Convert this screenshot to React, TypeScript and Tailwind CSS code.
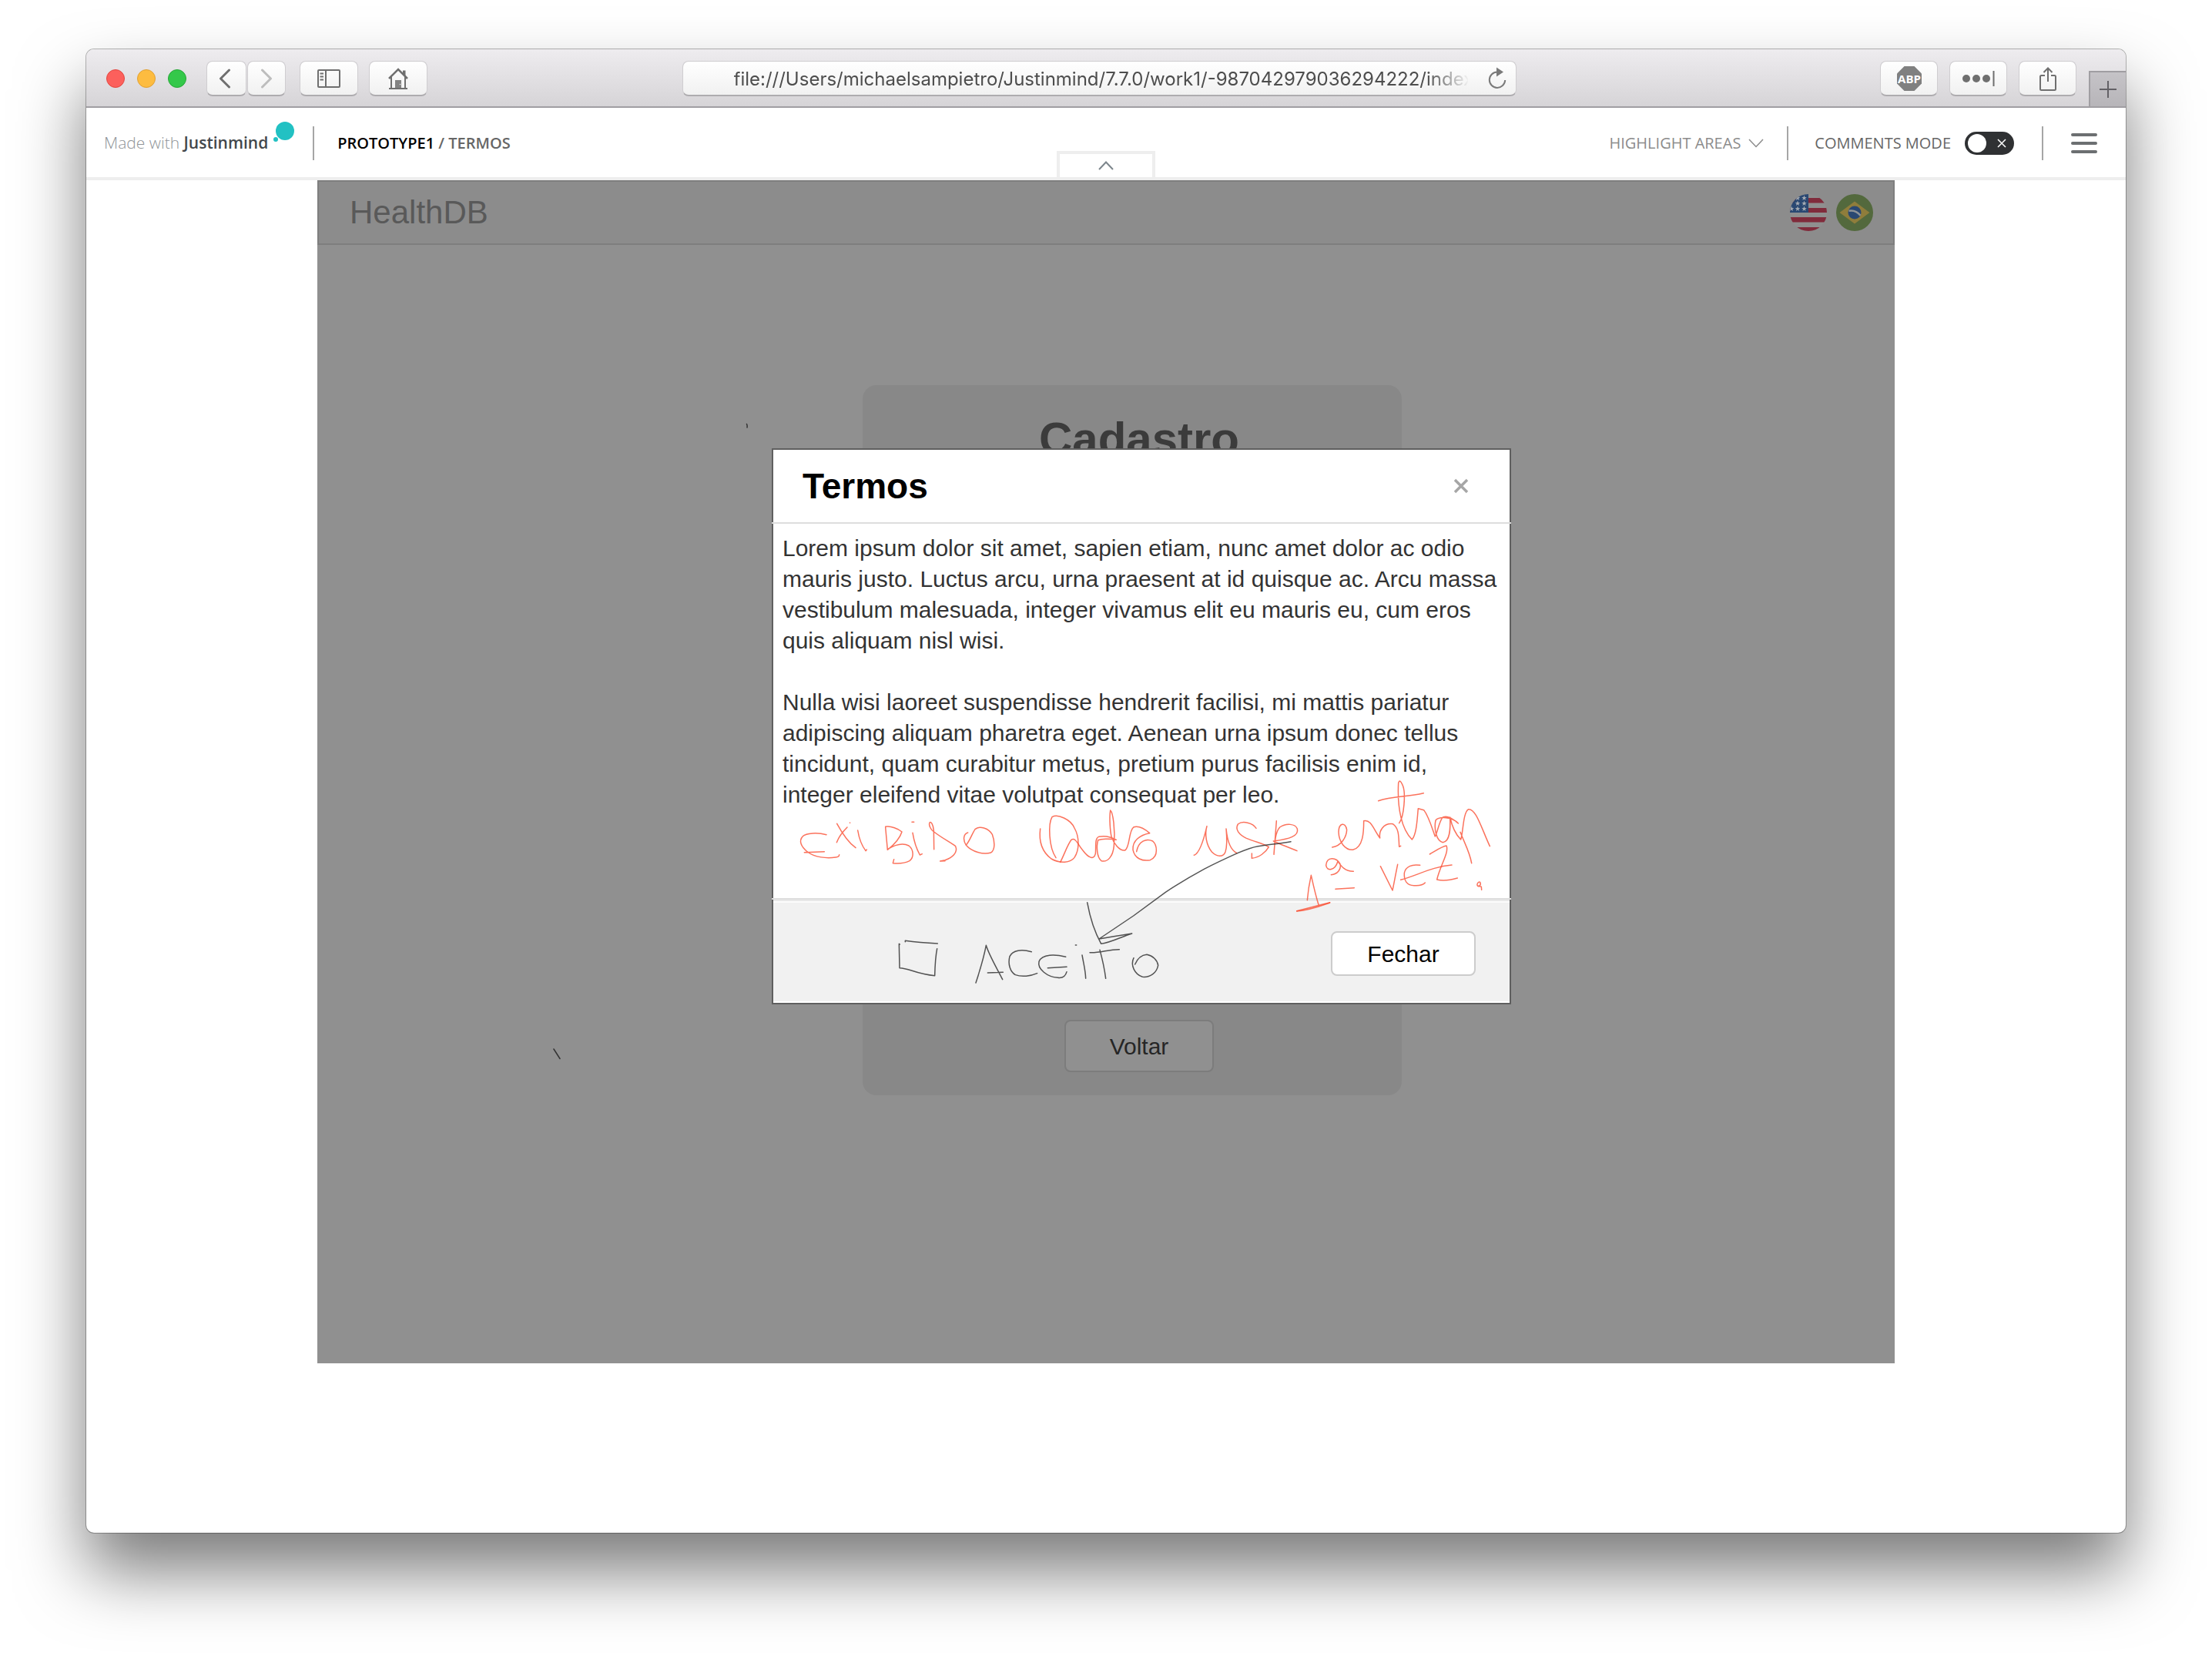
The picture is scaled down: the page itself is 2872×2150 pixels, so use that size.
import type { ReactNode } from "react";

const toolButton =
  "flex h-[46px] items-center justify-center rounded-[8px] border border-[#cfcdd0] border-b-2 border-b-[#aeacaf] bg-linear-to-b from-white to-[#f1f1f1] text-[#6f6f6f]";

function ToolButton({ label, size, children }: { label: string; size: string; children: ReactNode }) {
  return (
    <button type="button" aria-label={label} className={`${toolButton} ${size}`}>
      {children}
    </button>
  );
}

function BrowserToolbar() {
  return (
    <header className="flex h-[76px] items-center rounded-t-[10px] border-b-2 border-[#a09ea2] bg-linear-to-b from-[#eeecef] to-[#d6d4d7]">
      <div className="flex flex-1 items-center pt-[2px]">
        <div className="ml-[26px] flex gap-4">
          <button type="button" aria-label="Close window" className="size-6 rounded-full border border-[#e2463f] bg-[#fc605c]" />
          <button type="button" aria-label="Minimize window" className="size-6 rounded-full border border-[#e0a033] bg-[#fdbc40]" />
          <button type="button" aria-label="Zoom window" className="size-6 rounded-full border border-[#27a737] bg-[#34c84a]" />
        </div>
        <div className="ml-[26px] flex">
          <ToolButton label="Back" size="w-[52px] pr-1">
            <svg width="16" height="26" viewBox="0 0 16 26" fill="none" stroke="currentColor" strokeWidth="3" strokeLinecap="round" strokeLinejoin="round">
              <path d="M13.500 2L2.500 13l11 11" />
            </svg>
          </ToolButton>
          <ToolButton label="Forward" size="ml-px w-[50px]">
            <svg width="16" height="26" viewBox="0 0 16 26" fill="none" stroke="#bdbdbd" strokeWidth="3" strokeLinecap="round" strokeLinejoin="round">
              <path d="M2.500 2l11 11-11 11" />
            </svg>
          </ToolButton>
          <ToolButton label="Show sidebar" size="ml-[18px] w-[76px]">
            <svg width="32" height="26" viewBox="0 0 32 26" fill="none" stroke="currentColor" strokeWidth="2">
              <rect x="2" y="2" width="28" height="22" rx="1" />
              <path d="M12 2v22M4.500 6.500h4.500M4.500 10.500h4.500M4.500 14.500h4.500" />
            </svg>
          </ToolButton>
          <ToolButton label="Home" size="ml-[14px] w-[76px]">
            <svg width="28" height="30" viewBox="0 0 28 30" fill="none" stroke="currentColor" strokeWidth="2">
              <path d="M2 15L14 3l12 12" strokeWidth="2.500" />
              <path d="M5 13v14M23 13v14M2 28h24" />
              <path d="M20 4.500h3.500v8L20 9z" fill="currentColor" stroke="none" />
              <path d="M10 17h8v11h-8z" fill="currentColor" fillOpacity=".85" stroke="none" />
              <circle cx="16.500" cy="22.500" r=".7" fill="white" stroke="none" />
            </svg>
          </ToolButton>
        </div>
      </div>

      <div className="mt-[2px] mr-[18px] flex h-[46px] w-[1083px] items-center rounded-[8px] border border-[#cfcdd0] border-b-2 border-b-[#aeacaf] bg-linear-to-b from-white to-[#f1f1f1] pr-3 pl-[66px]">
        <input
          aria-label="Address"
          readOnly
          defaultValue="file:///Users/michaelsampietro/Justinmind/7.7.0/work1/-987042979036294222/index.html"
          className="min-w-0 flex-1 bg-transparent pt-[2px] font-[Inter,sans-serif] text-[24px] text-[#4d4d4d] outline-none mask-r-from-[900px] mask-r-to-[955px]"
        />
        <button type="button" aria-label="Reload" className="ml-[26px] text-[#7a7a7a]">
          <svg width="24" height="32" viewBox="0 0 24 32" fill="none" stroke="currentColor" strokeWidth="2">
            <path d="M12 7.500a10.200 10.200 0 1 0 10.200 10.500" />
            <path d="M11 1.500l9 6-9 6z" fill="currentColor" stroke="none" />
          </svg>
        </button>
      </div>

      <div className="flex h-full flex-1 items-center justify-end">
        <div className="flex gap-[15px] pt-[2px]">
          <ToolButton label="Adblock Plus" size="w-[75px]">
            <svg width="32" height="32" viewBox="0 0 32 32">
              <path d="M9.500 0h13L32 9.500v13L22.500 32h-13L0 22.500v-13z" fill="#808080" />
              <text x="16" y="22" textAnchor="middle" fill="white" className="font-['Open_Sans',sans-serif] text-[15px] font-bold">
                ABP
              </text>
            </svg>
          </ToolButton>
          <ToolButton label="Passwords" size="w-[75px]">
            <svg width="44" height="22" viewBox="0 0 44 22" fill="currentColor">
              <circle cx="6" cy="11" r="5" />
              <circle cx="19" cy="11" r="5" />
              <circle cx="32" cy="11" r="5" />
              <path d="M40.500 1h2v20h-2z" />
            </svg>
          </ToolButton>
          <ToolButton label="Share" size="w-[75px]">
            <svg width="24" height="32" viewBox="0 0 24 32" fill="none" stroke="currentColor" strokeWidth="2">
              <path d="M8 12H3.500q-1.500 0-1.500 1.500v16q0 1.500 1.500 1.500h17q1.500 0 1.500-1.500v-16q0-1.500-1.500-1.500H16" />
              <path d="M12 20V2.500M6.500 8L12 2.500 17.500 8" />
            </svg>
          </ToolButton>
        </div>
        <button type="button" aria-label="New tab" className="ml-4 flex h-[46px] w-12 items-center justify-center self-end border-t-2 border-l-2 border-[#a09ea2] bg-linear-to-b from-[#c5c3c7] to-[#b7b5b9] text-[#636166]">
          <svg width="24" height="24" viewBox="0 0 24 24" stroke="currentColor" strokeWidth="2">
            <path d="M12 1v22M1 12h22" />
          </svg>
        </button>
      </div>
    </header>
  );
}

function Divider() {
  return <span className="h-11 w-[2px] bg-[#a6a6a6]" />;
}

function PrototypeBar() {
  return (
    <nav className="relative flex h-[94px] items-center justify-between border-b-4 border-[#eee] pt-[2px] pr-[37px] pl-[23px] font-['Open_Sans',sans-serif] text-[20px]">
      <div className="flex items-center">
        <a href="#justinmind" className="flex text-[21px] font-light text-[#8f9498]">
          <span>
            Made with <span className="font-semibold text-[#43484c]">Justinmind</span>
          </span>
          <svg className="-mt-3 ml-[6px]" width="28" height="28" viewBox="0 0 28 28" fill="#22c1c3">
            <circle cx="16" cy="12" r="12" />
            <circle cx="4" cy="23" r="3" />
          </svg>
        </a>
        <div className="ml-6 flex items-center gap-[30px]">
          <Divider />
          <p className="font-semibold text-[#666]">
            <span className="text-black">PROTOTYPE1</span> / TERMOS
          </p>
        </div>
      </div>

      <button
        type="button"
        aria-label="Collapse bar"
        className="absolute bottom-0 left-1/2 flex h-[34px] w-32 -translate-x-1/2 items-center justify-center border-4 border-b-0 border-[#eee]"
      >
        <svg width="20" height="12" viewBox="0 0 20 12" fill="none" stroke="#7d868c" strokeWidth="2">
          <path d="M1 11l9-9.500 9 9.500" />
        </svg>
      </button>

      <div className="flex items-center">
        <button type="button" className="flex items-center gap-[10px] text-[#8c8c8c]">
          HIGHLIGHT AREAS
          <svg width="20" height="12" viewBox="0 0 20 12" fill="none" stroke="currentColor" strokeWidth="1.500">
            <path d="M1 1l9 9.500L19 1" />
          </svg>
        </button>
        <div className="ml-[30px] flex items-center gap-9">
          <div className="flex items-center gap-[34px]">
            <Divider />
            <label className="flex items-center gap-[18px] text-[#666]">
              COMMENTS MODE
              <input type="checkbox" role="switch" className="peer sr-only" />
              <span className="flex h-[30px] w-16 items-center justify-between rounded-full bg-[#2f3133] pr-[10px] pl-1">
                <span className="size-6 rounded-full bg-white" />
                <svg width="12" height="12" viewBox="0 0 12 12" stroke="white" strokeWidth="1.500">
                  <path d="M1 1l10 10M11 1L1 11" />
                </svg>
              </span>
            </label>
          </div>
          <Divider />
          <button type="button" aria-label="Menu" className="flex w-[34px] flex-col gap-[7px]">
            <span className="h-1 rounded-full bg-[#6c6f71]" />
            <span className="h-1 rounded-full bg-[#6c6f71]" />
            <span className="h-1 rounded-full bg-[#6c6f71]" />
          </button>
        </div>
      </div>
    </nav>
  );
}

const star = "M0-3.500L.9-1.100H3.300L1.400.5 2.100 2.900 0 1.500-2.100 2.900-1.400.5-3.300-1.100H-.9z";

function FlagUS() {
  return (
    <svg width="48" height="48" viewBox="0 0 48 48">
      <clipPath id="us">
        <circle cx="24" cy="24" r="24" />
      </clipPath>
      <g clipPath="url(#us)">
        <path d="M0 0h48v48H0z" fill="#8f8f8f" />
        <path d="M0 5h48v6.500H0zM0 18h48v6H0zM0 30h48v6.500H0zM0 43h48v6H0z" fill="#802b3b" />
        <path d="M0 0h24v24H0z" fill="#2a4872" />
        <g fill="#a3a9b1">
          {[[18.500, 5], [10, 12], [18.500, 12], [2, 19], [10, 19], [18.500, 19], [10, 5]].map(([x, y]) => (
            <path key={`${x}-${y}`} d={star} transform={`translate(${x} ${y})`} />
          ))}
        </g>
      </g>
    </svg>
  );
}

function FlagBR() {
  return (
    <svg width="48" height="48" viewBox="0 0 48 48">
      <circle cx="24" cy="24" r="24" fill="#53693d" />
      <path d="M24 9.500L43.500 24 24 38.500 4.500 24z" fill="#8f7d3b" />
      <circle cx="24" cy="24" r="8.500" fill="#2a4872" />
      <path d="M16.500 21.800c5.500-1 11 1 15 6" fill="none" stroke="#8f9499" strokeWidth="2.600" />
    </svg>
  );
}

function Annotations() {
  return (
    <svg
      aria-hidden="true"
      className="pointer-events-none absolute inset-x-0 bottom-0 h-[284px] w-full overflow-visible"
      viewBox="36 0 2880 852"
      fill="none"
      strokeLinecap="round"
      strokeLinejoin="round"
    >
      <g stroke="#fa4a2e" strokeOpacity=".78" strokeWidth="4.500">
        <path d="M249 191C215 182 170 184 157 197C140 215 150 238 175 258C205 280 250 284 285 279Q299 277 299 269M163 260L241 257" />
        <path d="M290 148C310 185 335 222 363 242M330 162C310 182 297 200 289 221M340 145h1M371 174C376 205 388 235 402 254L406 249" />
        <path d="M479 162L487 250C510 232 535 205 543 180C530 168 500 156 479 160M487 248C520 228 550 224 570 234C590 250 590 280 573 293C555 302 530 304 508 302L512 287" />
        <path d="M582 142h8M585 184C590 215 602 250 613 270L622 266" />
        <path d="M668 248L667 175C665 150 656 138 651 144C646 155 658 175 668 180C700 205 735 222 752 236C762 260 740 280 711 290L692 294L711 293" />
        <path d="M800 183C782 188 780 212 793 232C815 258 860 270 890 261C908 248 904 215 895 190C880 165 845 155 828 170C815 190 806 218 794 230" />
        <path d="M1082 168C1076 215 1085 255 1125 285C1160 305 1200 300 1215 280C1235 250 1235 200 1215 165C1200 130 1150 110 1128 122C1112 150 1115 240 1143 281" />
        <path d="M1160 298C1175 270 1188 230 1203 211C1220 200 1228 230 1250 255C1265 275 1290 295 1297 265C1300 240 1293 205 1310 199C1330 195 1355 198 1378 211C1350 205 1320 208 1307 212C1300 235 1302 280 1320 293C1345 300 1365 275 1369 235C1375 170 1365 105 1355 96C1350 130 1355 180 1359 198C1368 225 1390 255 1412 252C1432 240 1425 180 1445 162C1465 155 1490 170 1508 185C1470 192 1440 215 1443 250C1450 285 1480 295 1510 290C1545 275 1536 230 1520 216C1495 205 1465 215 1457 257" />
      </g>
      <g transform="translate(1470 -60)" stroke="#fa4a2e" strokeOpacity=".78" strokeWidth="4.500">
        <path d="M211 331C232 325 250 265 261 218C252 250 258 290 280 318C300 338 325 340 333 318C342 290 338 250 336 228C340 270 350 310 378 323" />
        <path d="M453 226C440 205 400 195 382 210C370 230 385 250 415 265C450 280 480 285 502 299C490 320 465 340 436 343L436 324" />
        <path d="M532 197L522 328C525 280 528 240 545 222C570 205 605 208 613 228C620 255 585 268 520 276C550 290 580 300 612 314" />
        <path d="M749 300C785 295 805 260 806 232C800 200 775 205 774 240C775 280 800 312 830 310C870 300 872 240 872 197C900 190 910 230 935 264C930 235 950 205 985 209C1010 225 1008 260 1010 298L1016 295" />
        <path d="M1010 206C1030 180 1035 90 1025 62Q1012 30 1007 50C1002 150 1020 230 1060 270C1078 250 1080 190 1084 149L1106 155C1125 180 1138 225 1150 258C1160 240 1165 200 1180 183C1200 175 1220 190 1240 207C1215 180 1165 180 1152 195C1145 230 1155 275 1180 281C1208 278 1210 230 1208 183C1215 215 1230 250 1250 270C1260 240 1258 165 1280 152C1310 150 1330 225 1363 296M929 119C985 100 1040 105 1105 89M1248 241C1265 285 1285 320 1292 362" />
        <path d="M652 506C655 470 660 440 667 409C675 445 685 490 697 527M611 548L740 515" />
        <path d="M611 549C660 545 700 530 740 516" />
        <path d="M745 407C770 405 785 385 780 365C765 338 728 335 725 370C728 395 760 392 771 355C785 375 800 395 832 394M762 463L835 458" />
        <path d="M937 374L984 468C990 440 997 400 1004 367" />
        <path d="M1091 370C1060 365 1035 375 1030 400C1028 430 1040 450 1070 449C1090 450 1105 445 1111 438M1016 427C1080 410 1140 375 1215 369" />
        <path d="M1129 327C1150 315 1175 297 1194 294C1205 320 1170 370 1157 426C1180 432 1210 428 1237 420" />
        <path d="M1318 452C1308 448 1318 432 1325 436C1332 450 1315 455 1316 450L1330 454L1331 466" />
      </g>
      <g stroke="#2b2b2b" strokeOpacity=".8" strokeWidth="4.500">
        <path d="M535 618L532 616L534 710C570 710 600 735 671 740C672 700 674 665 680 635M556 608L556 604C600 610 640 613 682 615" />
        <path d="M831 768C845 725 862 670 871 622C882 660 915 715 935 755M877 729L937 727" />
        <path d="M1048 647C1010 637 975 640 963 665C955 695 965 725 985 737C1010 746 1045 742 1070 731" />
        <path d="M1181 667C1140 657 1090 655 1077 685C1070 715 1110 745 1150 748Q1178 752 1185 725M1111 710L1185 706" />
        <path d="M1219 621h4M1245 660C1252 700 1258 720 1259 751M1275 650C1315 652 1350 637 1390 638M1314 640C1325 680 1333 720 1337 751" />
        <path d="M1451 696C1460 675 1475 660 1497 658C1520 662 1538 680 1541 700C1535 730 1510 748 1480 745C1450 735 1432 700 1446 671" />
        <path d="M1265 455C1275 510 1288 560 1319 616C1355 612 1395 590 1439 576C1400 582 1350 590 1311 597L1445 507L1570 415C1620 382 1670 352 1720 325C1765 302 1810 281 1850 263C1880 250 1905 240 1930 236C1970 229 2015 226 2058 218" />
      </g>
    </svg>
  );
}

function TermsDialog() {
  return (
    <section role="dialog" aria-labelledby="terms-title" className="relative w-[960px] bg-white text-[30px]">
      <div className="border-2 border-b-0 border-[#5f5f5f] pr-[53px] pl-[38px]">
        <div className="flex h-[94px] items-center justify-between">
          <h2 id="terms-title" className="text-[46px] font-bold text-black">
            Termos
          </h2>
          <button type="button" aria-label="Close" className="text-[#a6a6a6]">
            <svg width="20" height="20" viewBox="0 0 20 20" stroke="currentColor" strokeWidth="3.500">
              <path d="M2 2l16 16M18 2L2 18" />
            </svg>
          </button>
        </div>
      </div>
      <div className="h-[2px] bg-[#ddd]" />
      <div className="min-h-[486px] border-x-2 border-[#5f5f5f] px-3 pt-3 leading-10 text-[#333]">
        <p>
          Lorem ipsum dolor sit amet, sapien etiam, nunc amet dolor ac odio mauris justo. Luctus arcu, urna praesent at
          id quisque ac. Arcu massa vestibulum malesuada, integer vivamus elit eu mauris eu, cum eros quis aliquam nisl
          wisi.
        </p>
        <p className="mt-10">
          Nulla wisi laoreet suspendisse hendrerit facilisi, mi mattis pariatur adipiscing aliquam pharetra eget. Aenean
          urna ipsum donec tellus tincidunt, quam curabitur metus, pretium purus facilisis enim id, integer eleifend
          vitae volutpat consequat per leo.
        </p>
      </div>
      <div className="h-[2px] bg-[#ddd]" />
      <div className="border-2 border-t-0 border-[#5f5f5f] pb-[2px]">
        <div className="h-[2px] bg-[#e8e8e8]" />
        <div className="flex h-[130px] items-center justify-end border-t-2 border-[#fcfcfc] bg-[#f1f1f1] pt-1 pr-11">
          <button type="button" className="h-[58px] w-[188px] rounded-[8px] border-2 border-[#ccc] bg-white text-black">
            Fechar
          </button>
        </div>
      </div>
      <Annotations />
    </section>
  );
}

function Prototype() {
  return (
    <main className="relative mx-auto flex min-h-[1536px] w-full max-w-[2048px] flex-col bg-[#909090] font-['Liberation_Sans',Arial,sans-serif]">
      <header className="flex h-[84px] items-center justify-between border-2 border-[#7e7e7e] bg-[#8c8c8c] pr-[26px] pl-[40px]">
        <h1 className="pb-[2px] text-[42px] text-[#595959]">HealthDB</h1>
        <div className="flex gap-3">
          <button type="button" aria-label="English">
            <FlagUS />
          </button>
          <button type="button" aria-label="Português">
            <FlagBR />
          </button>
        </div>
      </header>
      <section className="mt-[182px] ml-[708px] flex h-[922px] w-[700px] flex-col items-center justify-between rounded-[18px] bg-[#888] pt-[36px] pb-[30px] pl-[18px]">
        <h2 className="text-[60px] leading-[68px] font-bold text-[#3b3b3b]">Cadastro</h2>
        <button type="button" className="h-[68px] w-[194px] rounded-[8px] border-2 border-[#7c7c7c] bg-[#909090] text-[30px] text-[#262626]">
          Voltar
        </button>
      </section>

      <div className="absolute inset-0 pt-[348px] pl-[590px]">
        <TermsDialog />
      </div>
      <svg aria-hidden="true" className="pointer-events-none absolute inset-0 overflow-visible" width="2048" height="1536" viewBox="412 234 2048 1536" fill="none" stroke="#333" strokeWidth="1.500" strokeLinecap="round">
        <path d="M969.500 550.500q1 2 .5 4.500M719 1362l8 12.500" />
      </svg>
    </main>
  );
}

export default function App() {
  return (
    <div className="flex min-h-screen flex-col bg-white px-28 pt-16 pb-40">
      <div className="flex-1 rounded-[10px] bg-white shadow-[0_0_0_1px_rgba(0,0,0,0.28),0_50px_88px_rgba(0,0,0,0.52)]">
        <BrowserToolbar />
        <PrototypeBar />
        <Prototype />
      </div>
    </div>
  );
}
